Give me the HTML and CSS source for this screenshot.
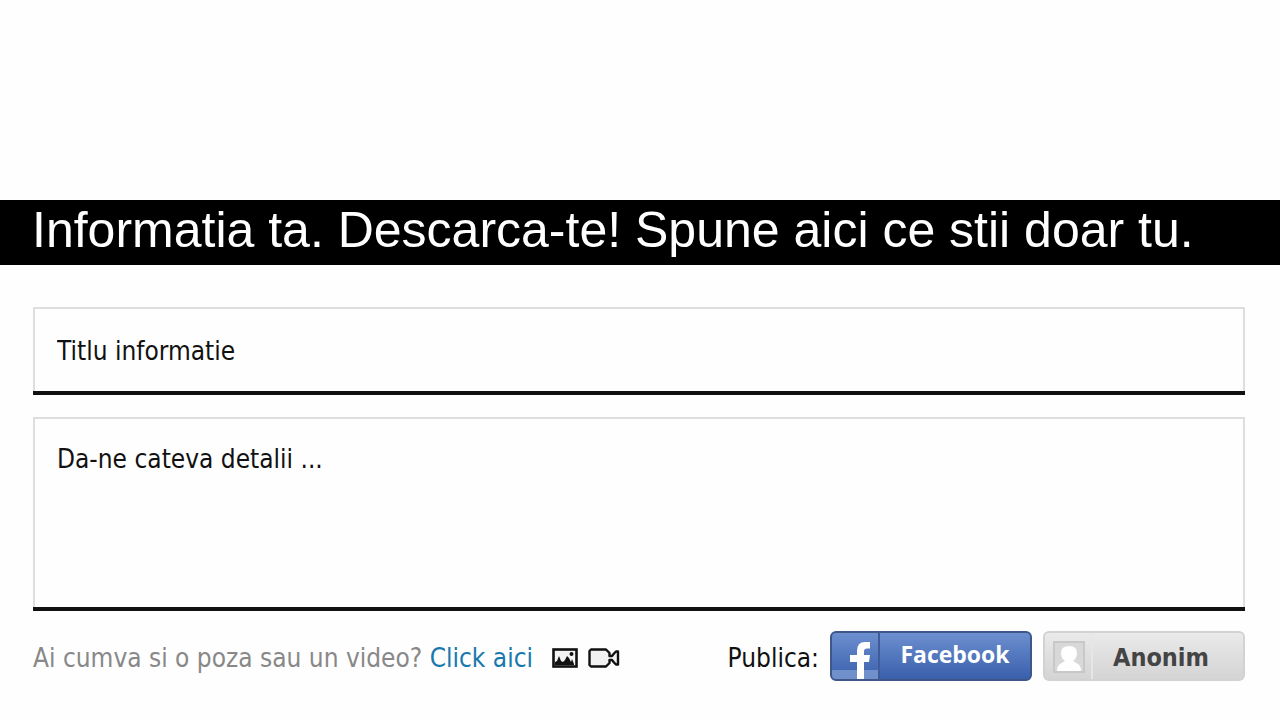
FILE: index.html
```
<!DOCTYPE html>
<html lang="ro">

<head>
    <meta charset="utf-8">
    <meta name="viewport" content="width=device-width">
    <title>Informatia ta</title>
    <link rel="stylesheet" href="styles.css">
</head>

<body>
    <h1 class="banner">Informatia ta. Descarca-te! Spune aici ce stii doar tu.</h1>

    <form class="tip-form">
        <input class="field" type="text" name="title" placeholder="Titlu informatie" aria-label="Titlu informatie">
        <textarea class="field details" name="details" placeholder="Da-ne cateva detalii ..." aria-label="Da-ne cateva detalii"></textarea>

        <div class="footer">
            <div class="attach">
                <span>Ai cumva si o poza sau un video? <a class="attach-link" href="#">Click aici</a></span>
                <span class="icons">
                    <svg width="26" height="20" viewBox="0 0 26 20">
                        <rect x="1.5" y="1.5" width="23" height="17" fill="#f4f4f4" stroke="#111" stroke-width="2.6" />
                        <path d="M3 17V14L5 13L7 8L9 13L11 14L13 12L15 8L17 10L19 14L20 11L22 16V17Z" fill="#111" />
                        <circle cx="19.5" cy="6" r="2" fill="#111" />
                    </svg>
                    <svg width="32" height="20" viewBox="0 0 32 20">
                        <path d="M3 1.5H18L21.5 5V8H24L26 5.5L28 3.5H30V16.5H28L26 14.5L24 12H21.5V15L18 18.5H3L1.5 17V3Z" fill="#f2f2f2" stroke="#111" stroke-width="2.4" stroke-linejoin="round" />
                    </svg>
                </span>
            </div>

            <div class="publish">
                <span class="publish-label">Publica:</span>
                <button class="btn facebook" type="button">
                    <span class="btn-icon">
                        <svg width="46" height="46" viewBox="0 0 46 46">
                            <rect y="37" width="46" height="9" fill="#6f90ca" />
                            <path d="M25 46V29H18V22H25V18Q25 9 33 9H38V15.5H35Q32 15.5 32 18.5V22H38L37 29H32V46Z" fill="#fff" />
                        </svg>
                    </span>
                    <span class="btn-text">Facebook</span>
                </button>
                <button class="btn anonim" type="button">
                    <span class="btn-icon">
                        <svg width="46" height="46" viewBox="0 0 46 46">
                            <rect x="9" y="9" width="30" height="30" fill="#d8d8d8" stroke="#c8c8c8" stroke-width="2" />
                            <path d="M12 38Q12 33 15 31L20 28Q16 25 16 20Q16 13 24 13Q32 13 32 20Q32 25 28 28L33 31Q36 33 36 38Z" fill="#fff" />
                        </svg>
                    </span>
                    <span class="btn-text">Anonim</span>
                </button>
            </div>
        </div>
    </form>
</body>

</html>
```
FILE: styles.css
```
* {
    box-sizing: border-box;
}

body {
    margin: 0;
    padding-top: 200px;
    background-color: #fefefe;
    font-family: "DejaVu Sans Condensed", "DejaVu Sans", Tahoma, sans-serif;
    font-size: 26px;
    line-height: 32px;
    color: #111;
}

.banner {
    margin: 0;
    padding: 0 32px 5px;
    background-color: black;
    color: white;
    font-family: "Liberation Sans", Arial, sans-serif;
    font-size: 50px;
    font-weight: normal;
    line-height: 60px;
}

.tip-form {
    padding: 42px 35px 0 33px;
}

.field {
    display: block;
    width: 100%;
    height: 84px;
    margin: 0 0 26px;
    padding: 2px 22px 0;
    border: 2px solid #dedede;
    border-bottom: 0;
    border-radius: 0;
    box-shadow: 0 4px 0 #111;
    background-color: #fefefe;
    color: #111;
    font: inherit;
    outline: none;
}

.field::placeholder {
    color: #111;
    opacity: 1;
}

.details {
    height: 190px;
    margin-bottom: 24px;
    padding-top: 24px;
    resize: none;
}

.footer {
    display: flex;
    flex-wrap: wrap;
    align-items: center;
    justify-content: space-between;
    gap: 10px;
}

.attach {
    display: flex;
    align-items: center;
    gap: 19px;
    padding-top: 3px;
    color: #888;
}

.attach-link {
    color: #1878ac;
    text-decoration: none;
}

.attach-link:hover {
    text-decoration: underline;
}

.icons {
    display: flex;
    gap: 10px;
}

.publish {
    display: flex;
    align-items: center;
    gap: 11px;
}

.publish-label {
    padding-top: 3px;
}

.btn {
    display: flex;
    align-items: center;
    width: 202px;
    height: 50px;
    padding: 0;
    overflow: hidden;
    border: 2px solid;
    border-radius: 6px;
    font-weight: bold;
    cursor: pointer;
}

.btn-icon {
    display: flex;
    border-right: 2px solid;
}

.btn-text {
    flex: 1;
    text-align: center;
}

.facebook {
    border-color: #3f5688;
    background: linear-gradient(#6c8fcf, #3a60ac);
    color: white;
    font-family: "Open Sans", sans-serif;
    font-size: 23px;
}

.facebook .btn-icon {
    border-color: #3f5c98;
}

.facebook .btn-text {
    padding-bottom: 4px;
}

.anonim {
    border-color: #d2d2d2;
    background: linear-gradient(#eaeaea, #d4d4d4);
    color: #444;
    font-family: "DejaVu Sans Condensed", "DejaVu Sans", Tahoma, sans-serif;
    font-size: 25px;
}

.anonim .btn-icon {
    border-color: #e6e6e6;
}

.anonim .btn-text {
    padding: 3px 14px 0 0;
}
```
